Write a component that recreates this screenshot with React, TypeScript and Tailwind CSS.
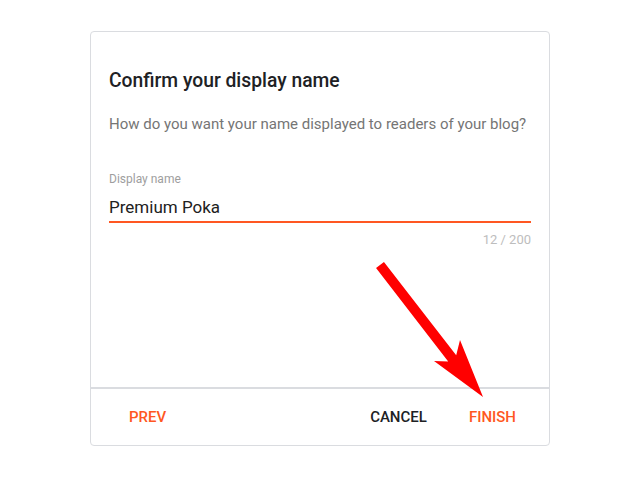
export default function App() {
  return (
    <div className="relative w-[640px] h-[480px] bg-white pt-[31px] font-['Roboto',sans-serif]">
      <div className="mx-auto w-[460px] h-[415px] border border-[#dadce0] rounded-[4px] flex flex-col">
        <div className="flex-1 px-[18px] pt-[37px]">
          <h1 className="text-[19.3px] leading-[24px] font-medium text-[#202124]">Confirm your display name</h1>
          <p className="mt-[21px] text-[15px] leading-[20px] text-[#757575]">
            How do you want your name displayed to readers of your blog?
          </p>
          <div className="mt-[37px]">
            <div className="text-[12px] leading-[16px] text-[#9e9e9e]">Display name</div>
            <div className="mt-[8px] text-[17px] leading-[24px] text-[#212121] pb-[2px] border-b-2 border-[#ff5722]">
              Premium Poka
            </div>
            <div className="mt-[9px] text-right text-[13px] leading-[16px] text-[#bdbdbd]">12 / 200</div>
          </div>
        </div>
        <div className="h-[58px] border-t-2 border-[#dadce0] flex items-center pl-[18px] pr-[13px]">
          <button className="px-5 h-9 text-[15px] font-medium text-[#ff5722]">PREV</button>
          <div className="flex-1" />
          <button className="px-5 h-9 text-[15px] font-medium text-[#202124]">CANCEL</button>
          <button className="ml-[2px] px-5 h-9 text-[15px] font-medium text-[#ff5722]">FINISH</button>
        </div>
      </div>
      <svg className="absolute left-0 top-0 pointer-events-none" width="640" height="480">
        <polygon
          fill="#ff0000"
          points="383.96,261.94 456.2,355.2 460,340 483,397 434,361 448.2,361.4 376.04,268.06"
        />
      </svg>
    </div>
  );
}
